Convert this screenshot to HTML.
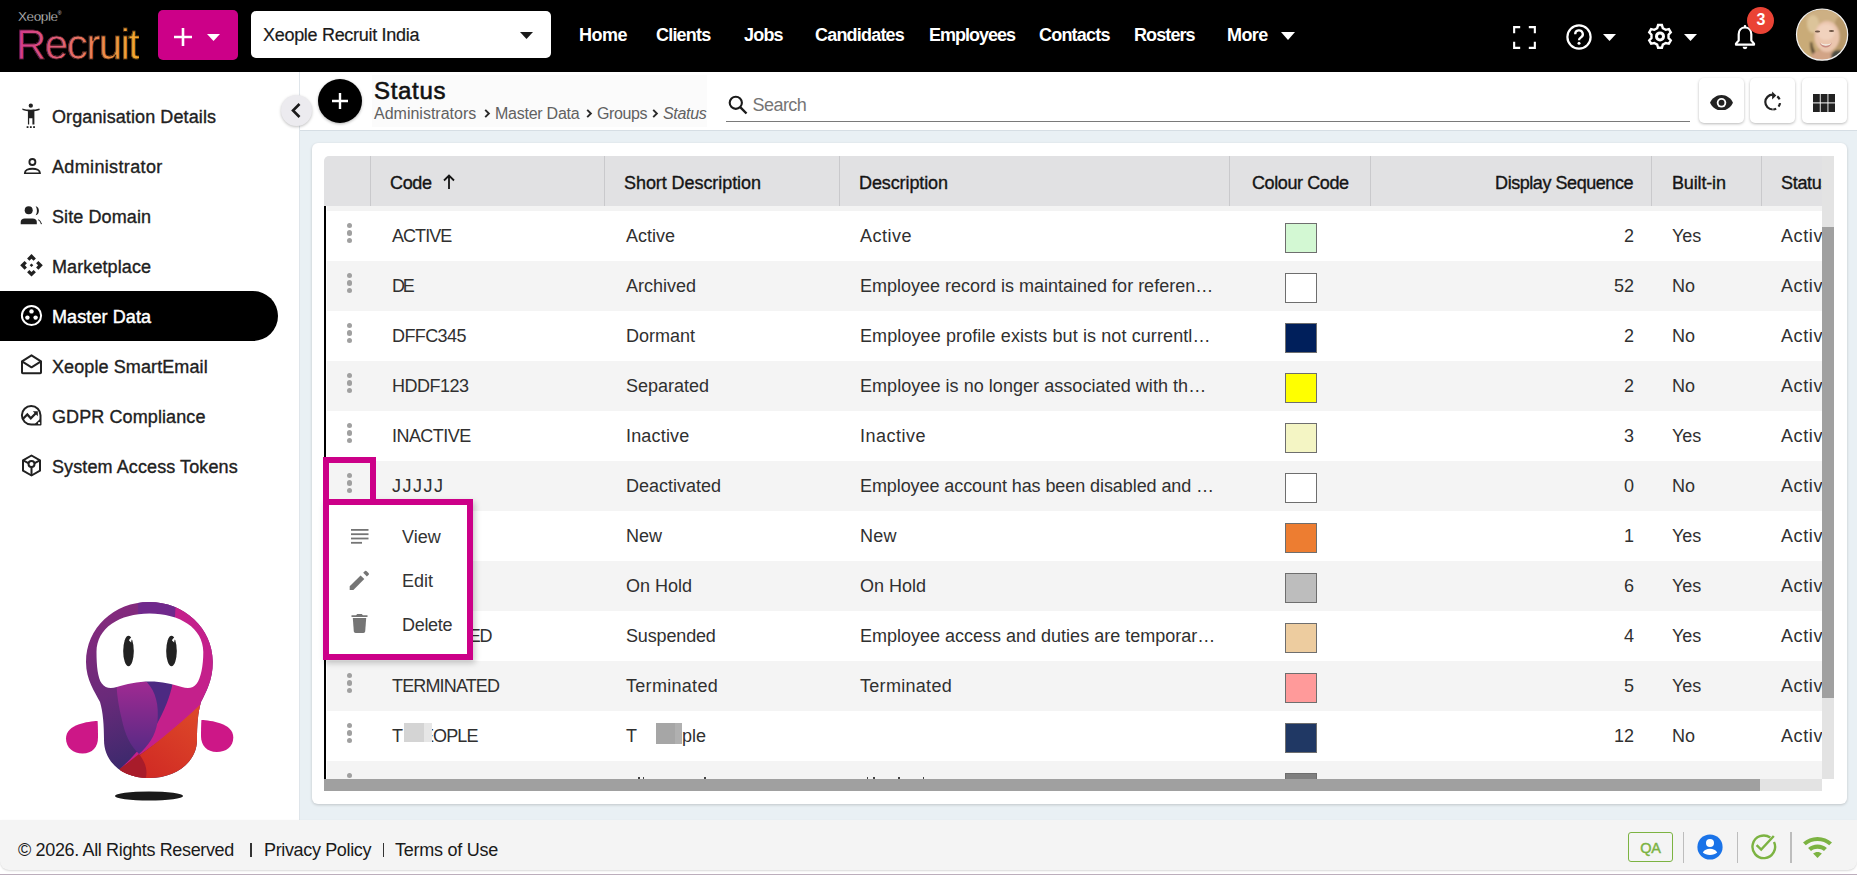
<!DOCTYPE html>
<html><head><meta charset="utf-8">
<style>
*{box-sizing:border-box;margin:0;padding:0}
html,body{width:1857px;height:875px;overflow:hidden;background:#fff;font-family:"Liberation Sans",sans-serif;color:#222}
.a{position:absolute}
.t{position:absolute;white-space:nowrap;line-height:1}
#hdr{left:0;top:0;width:1857px;height:72px;background:#000}
.nav{color:#fff;font-weight:bold;font-size:18px;top:27px}
#side{left:0;top:72px;width:299px;height:748px;background:#fff}
.si{font-size:18px;color:#212121;-webkit-text-stroke:0.35px #212121}
#cbg{left:299px;top:72px;width:1558px;height:748px;background:#e9f0f4;border-left:1px solid #dfe5ea}
#chead{left:300px;top:72px;width:1557px;height:59px;background:#fff;border-bottom:1px solid #d6dee4}
#card{left:312px;top:143px;width:1535px;height:661px;background:#fff;border-radius:6px;box-shadow:0 1px 3px rgba(0,0,0,.18)}
#thead{left:324px;top:156px;width:1498px;height:50px;background:#e1e1e3;border-top-left-radius:5px}
.th{font-size:18px;color:#151515;-webkit-text-stroke:0.35px #151515;top:176px}
.vd{position:absolute;top:156px;width:1px;height:50px;background:#c9c9cc}
.row{position:absolute;left:327px;width:1495px;height:50px}
.td{font-size:18px;color:#303030}
.sw{position:absolute;width:32px;height:30px;border:1px solid #6e6e6e}
.keb{position:absolute;width:6px;height:6px;border-radius:50%;background:#a0a0a0}
#foot{left:0;top:820px;width:1857px;height:50px;background:#f4f4f4;border-radius:0 0 9px 9px;box-shadow:0 1px 2px rgba(0,0,0,.15)}
.ft{font-size:18px;color:#1a1a1a;top:843px}
</style></head><body>
<div id="hdr" class="a"></div>
<div id="side" class="a"></div>
<div id="cbg" class="a"></div>
<div id="chead" class="a"></div>
<div id="card" class="a"></div>
<div id="foot" class="a"></div>
<!-- HEADER -->
<div class="t" style="left:18px;top:9.5px;font-size:13.5px;color:#d8d8d8;letter-spacing:-0.4px;-webkit-text-stroke:0.3px #000">Xeople<sup style="font-size:5px;vertical-align:6px;-webkit-text-stroke:0">®</sup></div>
<div class="t" style="left:16px;top:24px;font-size:42px;letter-spacing:-1.5px;background:linear-gradient(90deg,#d2378f 0%,#e2646f 40%,#ee8a4c 70%,#f3aa2c 100%);-webkit-background-clip:text;background-clip:text;color:transparent;-webkit-text-stroke:0.6px #000">Recruit</div>
<div class="a" style="left:158px;top:10px;width:80px;height:50px;background:#cc0088;border-radius:5px"></div>
<svg class="a" style="left:174px;top:28px" width="18" height="18" viewBox="0 0 18 18"><path d="M9 0v18M0 9h18" stroke="#fff" stroke-width="2.6"/></svg>
<svg class="a" style="left:207px;top:34px" width="13" height="7" viewBox="0 0 13 7"><path d="M0 0h13L6.5 7z" fill="#fff"/></svg>
<div class="a" style="left:251px;top:11px;width:300px;height:47px;background:#fff;border-radius:5px"></div>
<div class="t" style="left:263px;top:25.8px;font-size:18px;color:#1a1a1a;letter-spacing:-0.3px;-webkit-text-stroke:0.2px #1a1a1a">Xeople Recruit India</div>
<svg class="a" style="left:520px;top:32px" width="13" height="7" viewBox="0 0 13 7"><path d="M0 0h13L6.5 7z" fill="#1a1a1a"/></svg>
<div class="t nav" style="left:579px;top:25.8px;letter-spacing:-0.5px">Home</div>
<div class="t nav" style="left:656px;top:25.8px;letter-spacing:-0.8px">Clients</div>
<div class="t nav" style="left:744px;top:25.8px;letter-spacing:-0.8px">Jobs</div>
<div class="t nav" style="left:815px;top:25.8px;letter-spacing:-0.8px">Candidates</div>
<div class="t nav" style="left:929px;top:25.8px;letter-spacing:-1px">Employees</div>
<div class="t nav" style="left:1039px;top:25.8px;letter-spacing:-0.8px">Contacts</div>
<div class="t nav" style="left:1134px;top:25.8px;letter-spacing:-0.9px">Rosters</div>
<div class="t nav" style="left:1227px;top:25.8px;letter-spacing:-0.6px">More</div>
<svg class="a" style="left:1281px;top:32px" width="14" height="8" viewBox="0 0 14 8"><path d="M0 0h14L7 8z" fill="#fff"/></svg>
<!-- fullscreen -->
<svg class="a" style="left:1512.5px;top:25.6px" width="23" height="23" viewBox="0 0 24 24" fill="none" stroke="#fff" stroke-width="2.2"><path d="M1.2 7.5V1.2H7.5M16.5 1.2h6.3V7.5M22.8 16.5v6.3H16.5M7.5 22.8H1.2V16.5"/></svg>
<!-- help -->
<svg class="a" style="left:1566px;top:24px" width="26" height="26" viewBox="0 0 26 26"><circle cx="13" cy="13" r="11.6" fill="none" stroke="#fff" stroke-width="2.2"/><path d="M9.2 10.2a3.8 3.8 0 1 1 5.6 3.3c-1.2.7-1.8 1.3-1.8 2.8" fill="none" stroke="#fff" stroke-width="2.3"/><circle cx="13" cy="19.3" r="1.5" fill="#fff"/></svg>
<svg class="a" style="left:1603px;top:34px" width="13" height="7" viewBox="0 0 13 7"><path d="M0 0h13L6.5 7z" fill="#fff"/></svg>
<!-- gear -->
<svg class="a" style="left:1647px;top:23px" width="26" height="27" viewBox="0 0 26 27"><path d="M10.18 5.17 L11.11 2.06 L14.89 2.06 L15.82 5.17 L18.72 6.84 L21.88 6.09 L23.77 9.36 L21.54 11.73 L21.54 15.07 L23.77 17.44 L21.88 20.71 L18.72 19.96 L15.82 21.63 L14.89 24.74 L11.11 24.74 L10.18 21.63 L7.28 19.96 L4.12 20.71 L2.23 17.44 L4.46 15.07 L4.46 11.73 L2.23 9.36 L4.12 6.09 L7.28 6.84Z" fill="none" stroke="#fff" stroke-width="2.4" stroke-linejoin="miter"/><circle cx="13" cy="13.4" r="3.5" fill="none" stroke="#fff" stroke-width="3"/></svg>
<svg class="a" style="left:1684px;top:34px" width="13" height="7" viewBox="0 0 13 7"><path d="M0 0h13L6.5 7z" fill="#fff"/></svg>
<!-- bell -->
<svg class="a" style="left:1733px;top:24px" width="24" height="26" viewBox="0 0 24 26"><path d="M12 3.5c-3.9 0-6.3 3-6.3 6.8v6.2L3 19.6v1.1h18v-1.1l-2.7-3.1v-6.2c0-3.8-2.4-6.8-6.3-6.8z" fill="none" stroke="#fff" stroke-width="2.2" stroke-linejoin="round"/><path d="M9.6 22.8a2.4 2.4 0 0 0 4.8 0z" fill="#fff"/><rect x="10.8" y="1" width="2.4" height="3" rx="1" fill="#fff"/></svg>
<div class="a" style="left:1747px;top:7px;width:27px;height:27px;border-radius:50%;background:#ea4335"></div>
<div class="t" style="left:1747.5px;top:11.5px;width:27px;text-align:center;font-size:16px;font-weight:bold;color:#fff">3</div>
<!-- avatar -->
<svg class="a" style="left:1795px;top:8px" width="54" height="54" viewBox="0 0 54 54">
<defs><clipPath id="avc"><circle cx="27.1" cy="26.6" r="25.6"/></clipPath>
<filter id="bl" x="-20%" y="-20%" width="140%" height="140%"><feGaussianBlur stdDeviation="1.3"/></filter>
<filter id="bl2"><feGaussianBlur stdDeviation="0.6"/></filter></defs>
<g clip-path="url(#avc)">
<rect width="54" height="54" fill="#b89868"/>
<g filter="url(#bl)">
<ellipse cx="14" cy="28" rx="12" ry="22" fill="#c9ab78"/>
<ellipse cx="30" cy="10" rx="20" ry="9" fill="#cdb084"/>
<ellipse cx="46" cy="26" rx="8" ry="18" fill="#b8996a"/>
<ellipse cx="18" cy="16" rx="6" ry="9" fill="#dcc49a"/>
<path d="M17 34c1 6 3 10 5 12l-4 2c-2-4-3-9-3-14z" fill="#5a4830"/>
<ellipse cx="29" cy="50" rx="13" ry="8" fill="#d2a486"/>
<ellipse cx="44" cy="48" rx="8" ry="6" fill="#4c4c42"/>
<ellipse cx="32" cy="28.5" rx="12.5" ry="15.5" fill="#ebc6ae"/>
<ellipse cx="31" cy="24" rx="9" ry="8" fill="#f1d2bd"/>
</g>
<g filter="url(#bl2)">
<ellipse cx="22.5" cy="23.5" rx="2.6" ry="1.1" fill="#6e5444"/>
<ellipse cx="36.5" cy="23" rx="2.6" ry="1.1" fill="#6e5444"/>
<path d="M24.5 34.5c3 3.5 9.5 3.5 12.5 0-1 3.5-3.5 5-6.2 5s-5.3-1.5-6.3-5z" fill="#c88a80"/>
<path d="M25.5 35c2.8 1.8 8.5 1.8 10.8 0-.8 1.8-3 2.8-5.4 2.8s-4.6-1-5.4-2.8z" fill="#f4efe6"/>
</g>
</g>
<circle cx="27.1" cy="26.6" r="25.6" fill="none" stroke="#f2f2f2" stroke-width="1.2"/></svg>
<!-- SIDEBAR -->
<div class="a" style="left:0;top:291px;width:278px;height:50px;background:#000;border-radius:0 25px 25px 0"></div>
<div class="t si" style="left:52px;top:107.6px;letter-spacing:0.1px">Organisation Details</div>
<div class="t si" style="left:52px;top:157.6px;letter-spacing:0.35px">Administrator</div>
<div class="t si" style="left:52px;top:207.6px;letter-spacing:0.1px">Site Domain</div>
<div class="t si" style="left:52px;top:257.6px;letter-spacing:0.1px">Marketplace</div>
<div class="t si" style="left:52px;top:307.6px;color:#fff;-webkit-text-stroke:0.45px #fff;letter-spacing:0.1px">Master Data</div>
<div class="t si" style="left:52px;top:357.6px;letter-spacing:0.1px">Xeople SmartEmail</div>
<div class="t si" style="left:52px;top:407.6px;letter-spacing:0.1px">GDPR Compliance</div>
<div class="t si" style="left:52px;top:457.6px;letter-spacing:0.1px">System Access Tokens</div>
<!-- icons -->
<svg class="a" style="left:20px;top:102.5px" width="21.6" height="25.2" viewBox="0 0 24 28" fill="#212121"><circle cx="12" cy="3" r="2.4"/><path d="M2.5 6.2c2.8.9 5.9 1.3 9.5 1.3s6.7-.4 9.5-1.3l.5 1.7c-2 .6-4 1-6 1.2V24h-2.2v-7h-3.6v7H8.8V9.1c-2-.2-4-.6-6-1.2z"/><rect x="7.4" y="25.8" width="2" height="2"/><rect x="11" y="25.8" width="2" height="2"/><rect x="14.6" y="25.8" width="2" height="2"/></svg>
<svg class="a" style="left:22.6px;top:157.6px" width="18.8" height="16.9" viewBox="0 0 20 18" fill="none" stroke="#212121" stroke-width="2"><circle cx="10" cy="4.2" r="3.2"/><path d="M2 16.5v-.6c0-2.6 3.6-4.4 8-4.4s8 1.8 8 4.4v.6z"/></svg>
<svg class="a" style="left:20px;top:205px" width="24" height="22" viewBox="0 0 24 22" fill="#212121"><circle cx="8.7" cy="5.2" r="4"/><path d="M0.7 19.2v-2.2c0-2.2 1.5-3.6 4-3.6h8c2.5 0 4.1 1.4 4.1 3.6v2.2z"/><path d="M15.6 1.3c2.2.5 3.3 2.2 3.3 4.4s-1.1 4.1-3.3 4.6c.9-1.2 1.3-2.8 1.3-4.5s-.4-3.3-1.3-4.5z"/><path d="M18.3 14.6c1.6 1 2.8 2.6 3.2 4.6" fill="none" stroke="#212121" stroke-width="1.1"/></svg>
<svg class="a" style="left:16px;top:250px" width="32" height="32" viewBox="0 0 32 32" fill="#212121"><path d="M15.50 4.00 L19.90 8.40 L17.60 10.70 L15.50 8.70 L13.40 10.70 L11.10 8.40Z M26.80 15.30 L22.40 19.70 L20.10 17.40 L22.10 15.30 L20.10 13.20 L22.40 10.90Z M15.50 26.60 L11.10 22.20 L13.40 19.90 L15.50 21.90 L17.60 19.90 L19.90 22.20Z M4.20 15.30 L8.60 10.90 L10.90 13.20 L8.90 15.30 L10.90 17.40 L8.60 19.70Z M15.5 13.5 L17.3 15.3 L15.5 17.1 L13.7 15.3Z"/></svg>
<svg class="a" style="left:20px;top:304px" width="23" height="23" viewBox="0 0 23 23"><circle cx="11.5" cy="11.5" r="9.6" fill="none" stroke="#fff" stroke-width="2"/><circle cx="11.5" cy="7.4" r="2.2" fill="#fff"/><circle cx="7.4" cy="13.6" r="2.2" fill="#fff"/><circle cx="15.6" cy="13.6" r="2.2" fill="#fff"/></svg>
<svg class="a" style="left:20px;top:353px" width="23" height="22" viewBox="0 0 23 22" fill="none" stroke="#212121" stroke-width="2" stroke-linejoin="round"><path d="M2 8.3L11.5 2.3 21 8.3V19.5c0 .5-.3.8-.8.8H2.8c-.5 0-.8-.3-.8-.8z"/><path d="M2 8.3l9.5 6 9.5-6"/></svg>
<svg class="a" style="left:16px;top:400px" width="32" height="32" viewBox="0 0 32 32"><path d="M15.2 24.6A9.3 9.3 0 1 1 24.5 15.3V24.6z" fill="none" stroke="#212121" stroke-width="2" stroke-linejoin="round"/><path d="M19 23.8L24.5 18.5V24.6H19z" fill="#212121"/><circle cx="23.1" cy="23.2" r="1.1" fill="#fff"/><path d="M6.6 19.2L11.3 14.4 14.8 18.3 19.8 13.2" fill="none" stroke="#212121" stroke-width="2.2"/><path d="M16.8 11.2H21.8V16.2z" fill="#212121"/></svg>
<svg class="a" style="left:21px;top:454px" width="21" height="23" viewBox="0 0 21 23" fill="none" stroke="#212121" stroke-width="2" stroke-linejoin="round"><path d="M10.5 1.5l8.5 4.8v10.4l-8.5 4.8-8.5-4.8V6.3z"/><circle cx="10.5" cy="10" r="3"/><path d="M10.5 13v8.5M2.2 6.4l5.6 3M18.8 6.4l-5.6 3"/></svg>
<div class="a" style="left:281px;top:95px;width:31px;height:31px;border-radius:50%;background:#ecebef;box-shadow:0 1px 3px rgba(0,0,0,.25)"></div>
<svg class="a" style="left:290px;top:102px" width="12" height="17" viewBox="0 0 12 17"><path d="M9.5 2L3 8.5 9.5 15" fill="none" stroke="#1a1a1a" stroke-width="2.6"/></svg>
<!-- mascot -->
<svg class="a" style="left:60px;top:595px" width="180" height="210" viewBox="60 595 180 210">
<defs>
<clipPath id="body"><path d="M149.2 602C184 602 212.8 628 212.8 662C212.8 680 206 692 201 702C198 712 197 725 197 740C197 762 176 778 149.2 778C122 778 104 762 104 740C104 725 103 712 100 702C95 692 86 680 86 662C86 628 114 602 149.2 602Z"/></clipPath>
<linearGradient id="mg1" x1="0" y1="0" x2="0.25" y2="1"><stop offset="0" stop-color="#8c2a7e"/><stop offset="0.55" stop-color="#6a2a7a"/><stop offset="1" stop-color="#33296a"/></linearGradient>
<linearGradient id="mg2" x1="1" y1="0" x2="0" y2="1"><stop offset="0" stop-color="#e0502a"/><stop offset="1" stop-color="#cc1e22"/></linearGradient>
<linearGradient id="mg3" x1="0" y1="0" x2="0" y2="1"><stop offset="0" stop-color="#a02a92"/><stop offset="1" stop-color="#552a84"/></linearGradient>
</defs>
<g clip-path="url(#body)">
<rect x="80" y="595" width="140" height="190" fill="url(#mg1)"/>
<path d="M138 598h40l-4 24h-36z" fill="#70298c"/>
<path d="M146 680L175 680C172 700 160 730 139 754z" fill="#4c2a82"/>
<path d="M176 598h44v100L120.5 768.6C135 755 150 738 158 722 167 705 172 690 173 680 174 660 174 630 176 598z" fill="#c4208b"/>
<path d="M116.5 684C125 682 138 681 146.8 682C156 692 159 705 157.5 722C155.5 736 148 746 139 754C130 745 125 735 121.5 718C119 707 117 697 116.5 684z" fill="url(#mg3)"/>
<path d="M220 700V790H110L120.5 768.6C145 752 170 733 200.7 704.2z" fill="url(#mg2)"/>
<path d="M120.5 768.6L139 754C146 763 149 773 144 782H110z" fill="#a81c2a"/>
</g>
<path d="M96.5 652c0-24 23-38.5 53-38.5s53.8 14.5 53.8 38.5c0 14-2.5 26-6.5 31.5-3.5 5-9 5.5-15 3.5-9-3-20-5.5-32-5.5s-24 2.5-33 5.5c-6 2-11.5 1.5-15-3.5-4-5.5-5.3-17.5-5.3-31.5z" fill="#fff"/>
<ellipse cx="128.5" cy="651" rx="5.3" ry="15.2" fill="#222"/>
<ellipse cx="171.5" cy="651" rx="5.3" ry="15.2" fill="#222"/>
<path d="M129 640.5c.5-2.5 3-4 5.5-3-2.5 1-3.5 2.8-3.3 5z" fill="#fff"/>
<path d="M172 640.5c.5-2.5 3-4 5.5-3-2.5 1-3.5 2.8-3.3 5z" fill="#fff"/>
<path d="M97.5 721c-9 .5-31.5 3-31.5 17.5 0 9.5 7.5 15 16.5 15 10 0 15.5-6.5 15.5-16 0-6-.2-16.5-.5-16.5z" fill="#cd1787"/>
<path d="M201.5 720c9 .5 31.8 3 31.8 17.5 0 9.5-7.5 14.5-16.5 14.5-10 0-15.8-6.5-15.8-16 0-6 .2-16 .5-16z" fill="#cd1787"/>
<ellipse cx="149" cy="796" rx="34" ry="4.6" fill="#1a1a1a"/>
</svg>
<!-- CONTENT HEADER -->
<div class="a" style="left:372px;top:75px;width:335px;height:52px;background:#fbfbfb"></div>
<div class="a" style="left:318px;top:79px;width:44px;height:44px;border-radius:50%;background:#000;box-shadow:0 1px 3px rgba(0,0,0,.3)"></div>
<svg class="a" style="left:332px;top:93px" width="16" height="16" viewBox="0 0 16 16"><path d="M8 0v16M0 8h16" stroke="#fff" stroke-width="2.4"/></svg>
<div class="t" style="left:374px;top:78.8px;font-size:24px;color:#111;-webkit-text-stroke:0.6px #111;letter-spacing:0.7px">Status</div>
<div class="t" style="left:374px;top:106.2px;font-size:16px;color:#616161">Administrators</div>
<svg class="a" style="left:484px;top:109px" width="7" height="9" viewBox="0 0 7 9"><path d="M1.2 0.8l3.7 3.7-3.7 3.7" fill="none" stroke="#2a2a2a" stroke-width="1.9"/></svg>
<div class="t" style="left:495px;top:106.2px;font-size:16px;color:#616161;letter-spacing:-0.25px">Master Data</div>
<svg class="a" style="left:586px;top:109px" width="7" height="9" viewBox="0 0 7 9"><path d="M1.2 0.8l3.7 3.7-3.7 3.7" fill="none" stroke="#2a2a2a" stroke-width="1.9"/></svg>
<div class="t" style="left:597px;top:106.2px;font-size:16px;color:#616161;letter-spacing:-0.4px">Groups</div>
<svg class="a" style="left:652px;top:109px" width="7" height="9" viewBox="0 0 7 9"><path d="M1.2 0.8l3.7 3.7-3.7 3.7" fill="none" stroke="#2a2a2a" stroke-width="1.9"/></svg>
<div class="t" style="left:663px;top:106.2px;font-size:16px;font-style:italic;color:#616161;letter-spacing:-0.3px">Status</div>
<svg class="a" style="left:728px;top:95px" width="20" height="20" viewBox="0 0 20 20"><circle cx="7.8" cy="7.8" r="6.1" fill="none" stroke="#1a1a1a" stroke-width="2.1"/><path d="M12.2 12.2l6.3 6.3" stroke="#1a1a1a" stroke-width="2.4"/></svg>
<div class="t" style="left:752.5px;top:96.2px;font-size:18px;color:#757575;letter-spacing:-0.55px">Search</div>
<div class="a" style="left:726px;top:120.5px;width:964px;height:1.3px;background:#7a7a7a"></div>
<div class="a" style="left:1699px;top:78px;width:45px;height:45px;border-radius:5px;background:#fff;box-shadow:0 1px 3px rgba(0,0,0,.28)"></div>
<div class="a" style="left:1750px;top:78px;width:45px;height:45px;border-radius:5px;background:#fff;box-shadow:0 1px 3px rgba(0,0,0,.28)"></div>
<div class="a" style="left:1802px;top:78px;width:45px;height:45px;border-radius:5px;background:#fff;box-shadow:0 1px 3px rgba(0,0,0,.28)"></div>
<svg class="a" style="left:1710px;top:94.6px" width="23" height="15.6" viewBox="0 0 25 17"><path d="M12.5 0C7 0 2.3 3.4 0 8.5 2.3 13.6 7 17 12.5 17S22.7 13.6 25 8.5C22.7 3.4 18 0 12.5 0z" fill="#222"/><circle cx="12.5" cy="8.5" r="5.2" fill="#fff"/><circle cx="12.5" cy="8.5" r="3.2" fill="#222"/></svg>
<svg class="a" style="left:1760px;top:86px" width="28" height="28" viewBox="0 0 28 28" fill="none" stroke="#222" stroke-width="2.2"><path d="M12.7 8.700000000000001A7.4 7.4 0 0 0 12.7 23.5"/><path d="M17.26 10.27A7.4 7.4 0 0 1 19.56 13.33 M20.03 17.13A7.4 7.4 0 0 1 18.53 20.66 M16.17 22.63A7.4 7.4 0 0 1 13.22 23.48"/><path d="M12.1 5.4L16.3 9.4 12.1 13.6z" fill="#222" stroke="none"/></svg>
<svg class="a" style="left:1812.8px;top:94px" width="22.2" height="18" viewBox="0 0 22.2 18" fill="#222"><rect x="0" y="0" width="6.8" height="8.4"/><rect x="7.7" y="0" width="6.8" height="8.4"/><rect x="15.4" y="0" width="6.8" height="8.4"/><rect x="0" y="9.4" width="6.8" height="8.6"/><rect x="7.7" y="9.4" width="6.8" height="8.6"/><rect x="15.4" y="9.4" width="6.8" height="8.6"/></svg>
<!-- TABLE -->
<div id="thead" class="a"></div>
<div class="vd" style="left:370px"></div>
<div class="vd" style="left:604px"></div>
<div class="vd" style="left:839px"></div>
<div class="vd" style="left:1229px"></div>
<div class="vd" style="left:1370px"></div>
<div class="vd" style="left:1651px"></div>
<div class="vd" style="left:1761px"></div>
<div class="t th" style="left:390px;top:173.8px;letter-spacing:-0.35px">Code</div>
<div class="t th" style="left:624px;top:173.8px;letter-spacing:-0.07px">Short Description</div>
<div class="t th" style="left:859px;top:173.8px;letter-spacing:-0.1px">Description</div>
<div class="t th" style="left:1252px;top:173.8px;letter-spacing:-0.4px">Colour Code</div>
<div class="t th" style="left:1672px;top:173.8px;letter-spacing:-0.15px">Built-in</div>
<div class="t th" style="left:1781px;top:173.8px;letter-spacing:-0.3px">Status</div>
<div class="t th" style="left:1494px;top:173.8px;width:139px;text-align:right;letter-spacing:-0.45px">Display Sequence</div>
<svg class="a" style="left:443px;top:174px" width="12" height="15" viewBox="0 0 12 15"><path d="M6 15V2M1 6.5L6 1.5l5 5" fill="none" stroke="#151515" stroke-width="1.8"/></svg>
<div class="a" style="left:324px;top:206px;width:1498px;height:573px;overflow:hidden">
<div class="a" style="left:3px;top:0;width:1495px;height:5px;background:#f3f3f3"></div>
<div class="a" style="left:3px;top:5px;width:1495px;height:50px;background:#ffffff"></div>
<div class="keb" style="left:22.8px;top:16.8px;width:5.4px;height:5.4px"></div>
<div class="keb" style="left:22.8px;top:24.3px;width:5.4px;height:5.4px"></div>
<div class="keb" style="left:22.8px;top:31.8px;width:5.4px;height:5.4px"></div>
<div class="t td" style="left:68px;top:20.8px;letter-spacing:-0.95px">ACTIVE</div>
<div class="t td" style="left:302px;top:20.8px;letter-spacing:0">Active</div>
<div class="t td" style="left:536px;top:20.8px;letter-spacing:0.5px">Active</div>
<div class="sw" style="left:961px;top:17px;background:#d3f8d3"></div>
<div class="t td" style="left:1110px;top:20.8px;width:200px;text-align:right">2</div>
<div class="t td" style="left:1348px;top:20.8px">Yes</div>
<div class="t td" style="left:1457px;top:20.8px;letter-spacing:0.6px">Active</div>
<div class="a" style="left:3px;top:55px;width:1495px;height:50px;background:#f4f4f4"></div>
<div class="keb" style="left:22.8px;top:66.8px;width:5.4px;height:5.4px"></div>
<div class="keb" style="left:22.8px;top:74.3px;width:5.4px;height:5.4px"></div>
<div class="keb" style="left:22.8px;top:81.8px;width:5.4px;height:5.4px"></div>
<div class="t td" style="left:68px;top:70.8px;letter-spacing:-2.2px">DE</div>
<div class="t td" style="left:302px;top:70.8px;letter-spacing:0">Archived</div>
<div class="t td" style="left:536px;top:70.8px;letter-spacing:0">Employee record is maintained for referen…</div>
<div class="sw" style="left:961px;top:67px;background:#ffffff"></div>
<div class="t td" style="left:1110px;top:70.8px;width:200px;text-align:right">52</div>
<div class="t td" style="left:1348px;top:70.8px">No</div>
<div class="t td" style="left:1457px;top:70.8px;letter-spacing:0.6px">Active</div>
<div class="a" style="left:3px;top:105px;width:1495px;height:50px;background:#ffffff"></div>
<div class="keb" style="left:22.8px;top:116.8px;width:5.4px;height:5.4px"></div>
<div class="keb" style="left:22.8px;top:124.3px;width:5.4px;height:5.4px"></div>
<div class="keb" style="left:22.8px;top:131.8px;width:5.4px;height:5.4px"></div>
<div class="t td" style="left:68px;top:120.8px;letter-spacing:-0.6px">DFFC345</div>
<div class="t td" style="left:302px;top:120.8px;letter-spacing:0">Dormant</div>
<div class="t td" style="left:536px;top:120.8px;letter-spacing:0.1px">Employee profile exists but is not currentl…</div>
<div class="sw" style="left:961px;top:117px;background:#001f5b"></div>
<div class="t td" style="left:1110px;top:120.8px;width:200px;text-align:right">2</div>
<div class="t td" style="left:1348px;top:120.8px">No</div>
<div class="t td" style="left:1457px;top:120.8px;letter-spacing:0.6px">Active</div>
<div class="a" style="left:3px;top:155px;width:1495px;height:50px;background:#f4f4f4"></div>
<div class="keb" style="left:22.8px;top:166.8px;width:5.4px;height:5.4px"></div>
<div class="keb" style="left:22.8px;top:174.3px;width:5.4px;height:5.4px"></div>
<div class="keb" style="left:22.8px;top:181.8px;width:5.4px;height:5.4px"></div>
<div class="t td" style="left:68px;top:170.8px;letter-spacing:-0.5px">HDDF123</div>
<div class="t td" style="left:302px;top:170.8px;letter-spacing:0">Separated</div>
<div class="t td" style="left:536px;top:170.8px;letter-spacing:0.05px">Employee is no longer associated with th…</div>
<div class="sw" style="left:961px;top:167px;background:#ffff00"></div>
<div class="t td" style="left:1110px;top:170.8px;width:200px;text-align:right">2</div>
<div class="t td" style="left:1348px;top:170.8px">No</div>
<div class="t td" style="left:1457px;top:170.8px;letter-spacing:0.6px">Active</div>
<div class="a" style="left:3px;top:205px;width:1495px;height:50px;background:#ffffff"></div>
<div class="keb" style="left:22.8px;top:216.8px;width:5.4px;height:5.4px"></div>
<div class="keb" style="left:22.8px;top:224.3px;width:5.4px;height:5.4px"></div>
<div class="keb" style="left:22.8px;top:231.8px;width:5.4px;height:5.4px"></div>
<div class="t td" style="left:68px;top:220.8px;letter-spacing:-0.55px">INACTIVE</div>
<div class="t td" style="left:302px;top:220.8px;letter-spacing:0.18px">Inactive</div>
<div class="t td" style="left:536px;top:220.8px;letter-spacing:0.5px">Inactive</div>
<div class="sw" style="left:961px;top:217px;background:#f4f5c4"></div>
<div class="t td" style="left:1110px;top:220.8px;width:200px;text-align:right">3</div>
<div class="t td" style="left:1348px;top:220.8px">Yes</div>
<div class="t td" style="left:1457px;top:220.8px;letter-spacing:0.6px">Active</div>
<div class="a" style="left:3px;top:255px;width:1495px;height:50px;background:#f4f4f4"></div>
<div class="keb" style="left:22.8px;top:266.8px;width:5.4px;height:5.4px"></div>
<div class="keb" style="left:22.8px;top:274.3px;width:5.4px;height:5.4px"></div>
<div class="keb" style="left:22.8px;top:281.8px;width:5.4px;height:5.4px"></div>
<div class="t td" style="left:68px;top:270.8px;letter-spacing:1.5px">JJJJJ</div>
<div class="t td" style="left:302px;top:270.8px;letter-spacing:0">Deactivated</div>
<div class="t td" style="left:536px;top:270.8px;letter-spacing:-0.08px">Employee account has been disabled and …</div>
<div class="sw" style="left:961px;top:267px;background:#ffffff"></div>
<div class="t td" style="left:1110px;top:270.8px;width:200px;text-align:right">0</div>
<div class="t td" style="left:1348px;top:270.8px">No</div>
<div class="t td" style="left:1457px;top:270.8px;letter-spacing:0.6px">Active</div>
<div class="a" style="left:3px;top:305px;width:1495px;height:50px;background:#ffffff"></div>
<div class="keb" style="left:22.8px;top:316.8px;width:5.4px;height:5.4px"></div>
<div class="keb" style="left:22.8px;top:324.3px;width:5.4px;height:5.4px"></div>
<div class="keb" style="left:22.8px;top:331.8px;width:5.4px;height:5.4px"></div>
<div class="t td" style="left:68px;top:320.8px;letter-spacing:-0.5px">NEW</div>
<div class="t td" style="left:302px;top:320.8px;letter-spacing:0">New</div>
<div class="t td" style="left:536px;top:320.8px;letter-spacing:0.2px">New</div>
<div class="sw" style="left:961px;top:317px;background:#ed7d31"></div>
<div class="t td" style="left:1110px;top:320.8px;width:200px;text-align:right">1</div>
<div class="t td" style="left:1348px;top:320.8px">Yes</div>
<div class="t td" style="left:1457px;top:320.8px;letter-spacing:0.6px">Active</div>
<div class="a" style="left:3px;top:355px;width:1495px;height:50px;background:#f4f4f4"></div>
<div class="keb" style="left:22.8px;top:366.8px;width:5.4px;height:5.4px"></div>
<div class="keb" style="left:22.8px;top:374.3px;width:5.4px;height:5.4px"></div>
<div class="keb" style="left:22.8px;top:381.8px;width:5.4px;height:5.4px"></div>
<div class="t td" style="left:68px;top:370.8px;letter-spacing:-0.5px">ON HOLD</div>
<div class="t td" style="left:302px;top:370.8px;letter-spacing:0">On Hold</div>
<div class="t td" style="left:536px;top:370.8px;letter-spacing:0">On Hold</div>
<div class="sw" style="left:961px;top:367px;background:#bdbdbd"></div>
<div class="t td" style="left:1110px;top:370.8px;width:200px;text-align:right">6</div>
<div class="t td" style="left:1348px;top:370.8px">Yes</div>
<div class="t td" style="left:1457px;top:370.8px;letter-spacing:0.6px">Active</div>
<div class="a" style="left:3px;top:405px;width:1495px;height:50px;background:#ffffff"></div>
<div class="keb" style="left:22.8px;top:416.8px;width:5.4px;height:5.4px"></div>
<div class="keb" style="left:22.8px;top:424.3px;width:5.4px;height:5.4px"></div>
<div class="keb" style="left:22.8px;top:431.8px;width:5.4px;height:5.4px"></div>
<div class="t td" style="left:68px;top:420.8px;letter-spacing:-1.45px">SUSPENDED</div>
<div class="t td" style="left:302px;top:420.8px;letter-spacing:-0.15px">Suspended</div>
<div class="t td" style="left:536px;top:420.8px;letter-spacing:0">Employee access and duties are temporar…</div>
<div class="sw" style="left:961px;top:417px;background:#edcc9f"></div>
<div class="t td" style="left:1110px;top:420.8px;width:200px;text-align:right">4</div>
<div class="t td" style="left:1348px;top:420.8px">Yes</div>
<div class="t td" style="left:1457px;top:420.8px;letter-spacing:0.6px">Active</div>
<div class="a" style="left:3px;top:455px;width:1495px;height:50px;background:#f4f4f4"></div>
<div class="keb" style="left:22.8px;top:466.8px;width:5.4px;height:5.4px"></div>
<div class="keb" style="left:22.8px;top:474.3px;width:5.4px;height:5.4px"></div>
<div class="keb" style="left:22.8px;top:481.8px;width:5.4px;height:5.4px"></div>
<div class="t td" style="left:68px;top:470.8px;letter-spacing:-0.85px">TERMINATED</div>
<div class="t td" style="left:302px;top:470.8px;letter-spacing:0.3px">Terminated</div>
<div class="t td" style="left:536px;top:470.8px;letter-spacing:0.3px">Terminated</div>
<div class="sw" style="left:961px;top:467px;background:#ff9a9a"></div>
<div class="t td" style="left:1110px;top:470.8px;width:200px;text-align:right">5</div>
<div class="t td" style="left:1348px;top:470.8px">Yes</div>
<div class="t td" style="left:1457px;top:470.8px;letter-spacing:0.6px">Active</div>
<div class="a" style="left:3px;top:505px;width:1495px;height:50px;background:#ffffff"></div>
<div class="keb" style="left:22.8px;top:516.8px;width:5.4px;height:5.4px"></div>
<div class="keb" style="left:22.8px;top:524.3px;width:5.4px;height:5.4px"></div>
<div class="keb" style="left:22.8px;top:531.8px;width:5.4px;height:5.4px"></div>
<div class="t td" style="left:68px;top:520.8px">T</div>
<div class="t td" style="left:98px;top:520.8px;letter-spacing:-0.9px">EOPLE</div>
<div class="a" style="left:80px;top:516.7px;width:28px;height:19px;background:linear-gradient(90deg,#d4d4d4 70%,#e6e6e6 70%)"></div>
<div class="t td" style="left:302px;top:520.8px">T</div>
<div class="t td" style="left:358px;top:520.8px">ple</div>
<div class="a" style="left:332px;top:516.7px;width:26px;height:21px;background:linear-gradient(90deg,#a6a6a6 75%,#b0b0b0 75%)"></div>
<div class="sw" style="left:961px;top:517px;background:#203864"></div>
<div class="t td" style="left:1110px;top:520.8px;width:200px;text-align:right">12</div>
<div class="t td" style="left:1348px;top:520.8px">No</div>
<div class="t td" style="left:1457px;top:520.8px;letter-spacing:0.6px">Active</div>
<div class="a" style="left:3px;top:555px;width:1495px;height:50px;background:#f4f4f4"></div>
<div class="keb" style="left:22.8px;top:566.8px;width:5.4px;height:5.4px"></div>
<div class="keb" style="left:22.8px;top:574.3px;width:5.4px;height:5.4px"></div>
<div class="keb" style="left:22.8px;top:581.8px;width:5.4px;height:5.4px"></div>
<div class="t td" style="left:68px;top:570.8px;letter-spacing:-0.4px">UNKNOWN</div>
<div class="t td" style="left:302px;top:570.8px;letter-spacing:0">Unlisted</div>
<div class="t td" style="left:536px;top:570.8px;letter-spacing:0">Unlisted status</div>
<div class="sw" style="left:961px;top:567px;background:#7f7f7f"></div>
<div class="t td" style="left:1110px;top:570.8px;width:200px;text-align:right">7</div>
<div class="t td" style="left:1348px;top:570.8px">No</div>
<div class="t td" style="left:1457px;top:570.8px;letter-spacing:0.6px">Active</div>
<div class="a" style="left:314.3px;top:570.5px;width:1.6px;height:2.5px;background:#444"></div>
<div class="a" style="left:318.5px;top:570.5px;width:1.6px;height:2.5px;background:#444"></div>
<div class="a" style="left:380.0px;top:570.5px;width:1.6px;height:2.5px;background:#444"></div>
<div class="a" style="left:542.5px;top:570.5px;width:1.6px;height:2.5px;background:#444"></div>
<div class="a" style="left:549.2px;top:570.5px;width:1.6px;height:2.5px;background:#444"></div>
<div class="a" style="left:574.0px;top:570.5px;width:1.6px;height:2.5px;background:#444"></div>
<div class="a" style="left:598.5px;top:570.5px;width:1.6px;height:2.5px;background:#444"></div>
</div>
<div class="a" style="left:324px;top:206px;width:2px;height:573px;background:#000"></div>
<div class="a" style="left:1822px;top:156px;width:12px;height:623px;background:#e3e3e3"></div>
<div class="a" style="left:1822px;top:227px;width:12px;height:471px;background:#a0a0a0"></div>
<div class="a" style="left:324px;top:779px;width:1498px;height:12px;background:#e3e3e3"></div>
<div class="a" style="left:324px;top:779px;width:1436px;height:12px;background:#a0a0a0"></div>
<!-- POPUP -->
<div class="a" style="left:323px;top:499px;width:150px;height:161px;background:#fff;border:6px solid #cc0088;box-shadow:2px 3px 6px rgba(0,0,0,.22)"></div>
<div class="a" style="left:323px;top:457px;width:53px;height:48px;border:6px solid #cc0088;background:#f4f4f4"></div>
<div class="keb" style="left:346.8px;top:472.7px;width:5.4px;height:5.4px"></div>
<div class="keb" style="left:346.8px;top:480.3px;width:5.4px;height:5.4px"></div>
<div class="keb" style="left:346.8px;top:487.8px;width:5.4px;height:5.4px"></div>
<svg class="a" style="left:351px;top:529px" width="18" height="15" viewBox="0 0 18 15" fill="#757575"><rect x="0" y="0" width="17.5" height="1.8"/><rect x="0" y="4.3" width="17.5" height="1.8"/><rect x="0" y="8.6" width="17.5" height="1.8"/><rect x="0" y="12.9" width="11" height="1.8"/></svg>
<svg class="a" style="left:349px;top:570px" width="21" height="21" viewBox="0 0 21 21" fill="#757575"><path d="M0.7 16.3V20h3.7L15.3 9.1l-3.7-3.7z"/><path d="M19.7 4.7a1 1 0 0 0 0-1.4L17.4 1a1 1 0 0 0-1.4 0l-1.8 1.8 3.7 3.7z"/></svg>
<svg class="a" style="left:351px;top:613px" width="17" height="20" viewBox="0 0 17 20" fill="#757575"><path d="M1.8 5h13.4l-1 13.3c-.1 1-.8 1.7-1.8 1.7H4.6c-1 0-1.7-.7-1.8-1.7z"/><path d="M0.5 2.2h4.6L6.2 1h4.6l1.1 1.2h4.6V4H0.5z"/></svg>
<div class="t td" style="left:402px;top:528.4px;color:#333">View</div>
<div class="t td" style="left:402px;top:571.8px;color:#333">Edit</div>
<div class="t td" style="left:402px;top:615.8px;color:#333;letter-spacing:-0.3px">Delete</div>
<!-- FOOTER -->
<div class="t ft" style="left:18px;top:840.8px;letter-spacing:-0.35px">© 2026. All Rights Reserved</div>
<div class="a" style="left:250px;top:843px;width:1.5px;height:13.5px;background:#333"></div>
<div class="t ft" style="left:264px;top:840.8px;letter-spacing:-0.35px">Privacy Policy</div>
<div class="a" style="left:382.5px;top:843px;width:1.5px;height:13.5px;background:#333"></div>
<div class="t ft" style="left:395px;top:840.8px;letter-spacing:-0.25px">Terms of Use</div>
<div class="a" style="left:1628px;top:832px;width:45px;height:30px;border:1.6px solid #7cb342;border-radius:3px"></div>
<div class="t" style="left:1628px;top:840.5px;width:45px;text-align:center;font-size:14.5px;color:#7cb342;-webkit-text-stroke:0.45px #7cb342;letter-spacing:-0.3px">QA</div>
<div class="a" style="left:1682.7px;top:832px;width:1.5px;height:31px;background:#bdbdbd"></div>
<div class="a" style="left:1736.7px;top:832px;width:1.5px;height:31px;background:#bdbdbd"></div>
<div class="a" style="left:1790.2px;top:832px;width:1.5px;height:31px;background:#bdbdbd"></div>
<svg class="a" style="left:1697px;top:834px" width="26" height="26" viewBox="0 0 26 26"><circle cx="13" cy="13" r="12.6" fill="#1a73e8"/><circle cx="13" cy="9" r="4" fill="#fff"/><path d="M5.8 18.6c1.4-2.6 4-3.8 7.2-3.8s5.8 1.2 7.2 3.8c-1.6 1.6-4.2 2.4-7.2 2.4s-5.6-.8-7.2-2.4z" fill="#fff"/></svg>
<svg class="a" style="left:1749.3px;top:832.3px" width="28" height="28" viewBox="0 0 28 28" fill="none" stroke="#7cb342" stroke-width="2.4"><path d="M21.3 5.6A11.3 11.3 0 1 0 25 10"/><path d="M7.6 13.2l4.6 4.4L24.8 4"/></svg>
<svg class="a" style="left:1803px;top:837px" width="29" height="21" viewBox="0 0 29 21" fill="#7cb342"><path d="M14.5 0C8.8 0 3.9 2.1 0 5.4l2.8 2.8C5.9 5.6 10 4 14.5 4s8.6 1.6 11.7 4.2L29 5.4C25.1 2.1 20.2 0 14.5 0z"/><path d="M14.5 7.6c-3.6 0-6.9 1.3-9.4 3.5l2.9 2.9c1.8-1.4 4-2.3 6.5-2.3s4.7.9 6.5 2.3l2.9-2.9c-2.5-2.2-5.8-3.5-9.4-3.5z"/><path d="M14.5 15c-1.7 0-3.2.6-4.4 1.6l4.4 4.4 4.4-4.4c-1.2-1-2.7-1.6-4.4-1.6z"/></svg>
<div class="a" style="left:0;top:874px;width:1857px;height:1px;background:#bcaebc"></div>
</body></html>
